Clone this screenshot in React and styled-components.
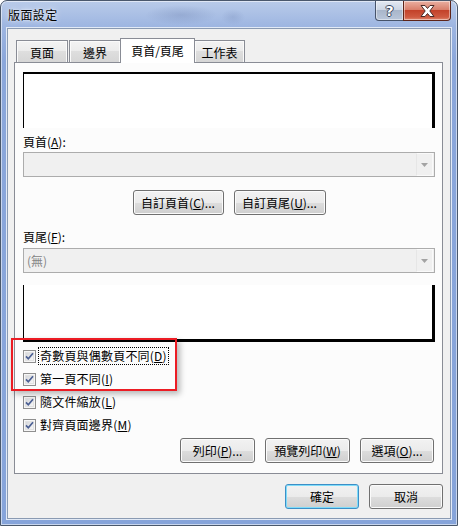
import React from "react";
import styled, { createGlobalStyle } from "styled-components";

const GlobalStyle = createGlobalStyle`
  html, body {
    margin: 0;
    padding: 0;
    background: #ffffff;
  }
  body {
    font-family: "Noto Sans CJK TC", "Noto Sans", sans-serif;
    font-size: 12px;
    color: #000;
  }
  * {
    box-sizing: border-box;
  }
`;

const Window = styled.div`
  position: relative;
  width: 458px;
  height: 526px;
  display: flex;
  flex-direction: column;
  padding: 0 6px 6px;
  border: 1px solid #4a586c;
  border-radius: 7px 7px 0 0;
  background:
    radial-gradient(ellipse 36px 10px at 180px 14px, rgba(80, 100, 150, 0.22), transparent 100%),
    radial-gradient(ellipse 12px 8px at 232px 16px, rgba(80, 100, 150, 0.16), transparent 100%),
    linear-gradient(180deg, #b9cbe9 0px, #9db5e1 26px, #8ba7db 60px, #86a4da 100%);
  box-shadow: inset 0 0 0 1px rgba(255, 255, 255, 0.55);
`;

const TitleBar = styled.div`
  height: 27px;
  display: flex;
  justify-content: space-between;
  padding-left: 1px;
`;

const Caption = styled.div`
  align-self: center;
  line-height: 14px;
  letter-spacing: 0.4px;
  text-shadow: 0 0 6px rgba(255, 255, 255, 0.9), 0 0 2px rgba(255, 255, 255, 0.8);
`;

const CaptionButtons = styled.div`
  display: flex;
  height: 20px;
`;

const CaptionButton = styled.div`
  height: 20px;
  display: flex;
  align-items: center;
  justify-content: center;
  border: 1px solid #46536a;
  border-top: none;
  box-shadow: inset 0 0 0 1px rgba(255, 255, 255, 0.45);
`;

const HelpButton = styled(CaptionButton)`
  width: 29px;
  border-radius: 0 0 0 4px;
  background: linear-gradient(180deg, #e3e9f2 0%, #cdd6e4 45%, #a9b6ca 50%, #b9c6da 100%);
  color: #fff;
  font-family: "DejaVu Sans", sans-serif;
  font-weight: bold;
  font-size: 14px;
  text-shadow: -1px 0 #39465c, 1px 0 #39465c, 0 -1px #39465c, 0 1px #39465c;
`;

const CloseButton = styled(CaptionButton)`
  width: 48px;
  margin-left: -1px;
  border-color: #5e2418;
  border-radius: 0 0 4px 0;
  background: linear-gradient(180deg, #eab0a2 0%, #d9806c 45%, #c3422a 50%, #cf5a41 85%, #e08a70 100%);
`;

const Client = styled.div`
  flex: 1;
  display: flex;
  flex-direction: column;
  padding: 9px 7px 9px 6px;
  background: #f0f0f0;
  border: 1px solid #8a9ab2;
  box-shadow: 0 0 0 1px #e2eaf6;
`;

const TabStrip = styled.div`
  display: flex;
  align-items: flex-end;
  height: 24px;
  padding-left: 2px;
`;

const Tab = styled.div`
  position: relative;
  width: ${(p) => p.$w}px;
  margin-left: ${(p) => p.$ml || 0}px;
  display: flex;
  align-items: center;
  justify-content: center;
  line-height: 14px;
  border: 1px solid #898c95;
  border-bottom: none;
  height: ${(p) => (p.$active ? 25 : 22)}px;
  margin-bottom: ${(p) => (p.$active ? -1 : 0)}px;
  padding-top: ${(p) => (p.$active ? 0 : 2)}px;
  z-index: ${(p) => (p.$active ? 2 : 1)};
  background: ${(p) =>
    p.$active
      ? "#ffffff"
      : "linear-gradient(180deg, #f3f3f3 0%, #ececec 45%, #dedede 50%, #d6d6d6 100%)"};
  box-shadow: ${(p) => (p.$active ? "none" : "inset 1px 1px 0 #fafafa, inset -1px 0 0 #fafafa")};
`;

const Panel = styled.div`
  flex: 1;
  display: flex;
  flex-direction: column;
  padding: 9px 7px 9px 8px;
  background: #fcfcfc;
  border: 1px solid #898c95;
`;

const PreviewBox = styled.div`
  background: #ffffff;
  border-color: #000;
  border-style: solid;
  border-width: ${(p) => (p.$footer ? "0 3px 3px 1px" : "2px 3px 0 1px")};
  height: ${(p) => (p.$footer ? 57 : 56)}px;
  margin-top: ${(p) => p.$mt || 0}px;
`;

const FieldLabel = styled.div`
  line-height: 14px;
  margin-top: ${(p) => p.$mt}px;
`;

const Combo = styled.div`
  height: 25px;
  margin-top: ${(p) => p.$mt}px;
  display: flex;
  align-items: center;
  justify-content: space-between;
  padding: 0 1px 0 3px;
  background: #f0f0f0;
  border: 1px solid #acacac;
  color: #858585;
  line-height: 14px;
`;

const ComboArrow = styled.div`
  width: 17px;
  height: 23px;
  display: flex;
  align-items: center;
  justify-content: center;
  border: 1px solid #fafafa;
  border-left-color: #e6e6e6;
`;

const ButtonRow = styled.div`
  display: flex;
  gap: 10px;
  justify-content: ${(p) => p.$justify || "center"};
  margin-top: ${(p) => p.$mt || 0}px;
  padding-right: ${(p) => p.$pr || 0}px;
`;

const Button = styled.button`
  width: ${(p) => p.$w}px;
  height: 25px;
  padding: 0;
  font: inherit;
  line-height: 14px;
  color: #000;
  border: 1px solid ${(p) => (p.$default ? "#3c8fc7" : "#707070")};
  border-radius: 3px;
  background: linear-gradient(180deg, #f2f2f2 0%, #ebebeb 50%, #dddddd 51%, #cfcfcf 100%);
  box-shadow: inset 0 0 0 1px ${(p) => (p.$default ? "#7fdcf9" : "#fbfbfb")};
`;

const CheckList = styled.div`
  display: flex;
  flex-direction: column;
  gap: 5px;
  margin-top: 5px;
`;

const CheckRow = styled.div`
  height: 18px;
  display: flex;
  align-items: center;
`;

const CheckLabel = styled.span`
  margin-left: 2px;
  padding: 1px 1px;
  line-height: 14px;
  letter-spacing: 0.2px;
  border: 1px dotted ${(p) => (p.$focus ? "#000" : "transparent")};
`;

const Annotation = styled.div`
  position: absolute;
  left: 10px;
  top: 337px;
  width: 166px;
  height: 53px;
  border: 2px solid #ec1c24;
  box-shadow: 3px 3px 6px rgba(0, 0, 0, 0.28);
  pointer-events: none;
`;

const DialogFooter = styled.div`
  display: flex;
  justify-content: flex-end;
  gap: 10px;
  margin-top: 10px;
`;

const CheckBox = () => (
  <svg width="13" height="13" viewBox="0 0 13 13">
    <defs>
      <linearGradient id="cbfill" x1="0" y1="0" x2="1" y2="1">
        <stop offset="0" stopColor="#d4d6da" />
        <stop offset="1" stopColor="#f8f8f8" />
      </linearGradient>
    </defs>
    <rect x="0.5" y="0.5" width="12" height="12" fill="#f6f6f6" stroke="#8f8f8f" />
    <rect x="2.5" y="2.5" width="8" height="8" fill="url(#cbfill)" stroke="#e2e2e2" />
    <path d="M3 6.3 L5.3 8.8 L10 3.2" fill="none" stroke="#4b5f93" strokeWidth="1.7" />
  </svg>
);

const DownArrow = () => (
  <svg width="7" height="4" viewBox="0 0 7 4">
    <path d="M0 0 H7 L3.5 4 Z" fill="#a3a3a3" />
  </svg>
);

const CloseGlyph = () => (
  <svg width="15" height="12" viewBox="0 0 15 12">
    <path
      d="M1 0.5 H5 L7.5 3.5 L10 0.5 H14 L9.8 6 L14 11.5 H10 L7.5 8.5 L5 11.5 H1 L5.2 6 Z"
      fill="#ffffff"
      stroke="#4a2a26"
      strokeWidth="1"
      strokeLinejoin="round"
    />
  </svg>
);

const checks = [
  { text: "奇數頁與偶數頁不同", key: "D", focus: true },
  { text: "第一頁不同", key: "I" },
  { text: "隨文件縮放", key: "L" },
  { text: "對齊頁面邊界", key: "M" },
];

export default function App() {
  return (
    <>
      <GlobalStyle />
      <Window>
        <TitleBar>
          <Caption>版面設定</Caption>
          <CaptionButtons>
            <HelpButton>?</HelpButton>
            <CloseButton>
              <CloseGlyph />
            </CloseButton>
          </CaptionButtons>
        </TitleBar>
        <Client>
          <TabStrip>
            <Tab $w={52}>頁面</Tab>
            <Tab $w={52} $ml={1}>邊界</Tab>
            <Tab $w={75} $ml={-1} $active>頁首/頁尾</Tab>
            <Tab $w={51} $ml={-1}>工作表</Tab>
          </TabStrip>
          <Panel>
            <PreviewBox />
            <FieldLabel $mt={7}>
              頁首(<u>A</u>):
            </FieldLabel>
            <Combo $mt={3}>
              <span />
              <ComboArrow>
                <DownArrow />
              </ComboArrow>
            </Combo>
            <ButtonRow $mt={13}>
              <Button $w={91}>
                自訂頁首(<u>C</u>)...
              </Button>
              <Button $w={92}>
                自訂頁尾(<u>U</u>)...
              </Button>
            </ButtonRow>
            <FieldLabel $mt={15}>
              頁尾(<u>F</u>):
            </FieldLabel>
            <Combo $mt={4}>
              <span>(無)</span>
              <ComboArrow>
                <DownArrow />
              </ComboArrow>
            </Combo>
            <PreviewBox $footer $mt={12} />
            <CheckList>
              {checks.map((c) => (
                <CheckRow key={c.key}>
                  <CheckBox />
                  <CheckLabel $focus={c.focus}>
                    {c.text}(<u>{c.key}</u>)
                  </CheckLabel>
                </CheckRow>
              ))}
            </CheckList>
            <ButtonRow $justify="flex-end" $mt={4} $pr={1}>
              <Button $w={75}>
                列印(<u>P</u>)...
              </Button>
              <Button $w={85}>
                預覽列印(<u>W</u>)
              </Button>
              <Button $w={74}>
                選項(<u>O</u>)...
              </Button>
            </ButtonRow>
          </Panel>
          <DialogFooter>
            <Button $w={74} $default>
              確定
            </Button>
            <Button $w={74}>取消</Button>
          </DialogFooter>
        </Client>
        <Annotation />
      </Window>
    </>
  );
}
